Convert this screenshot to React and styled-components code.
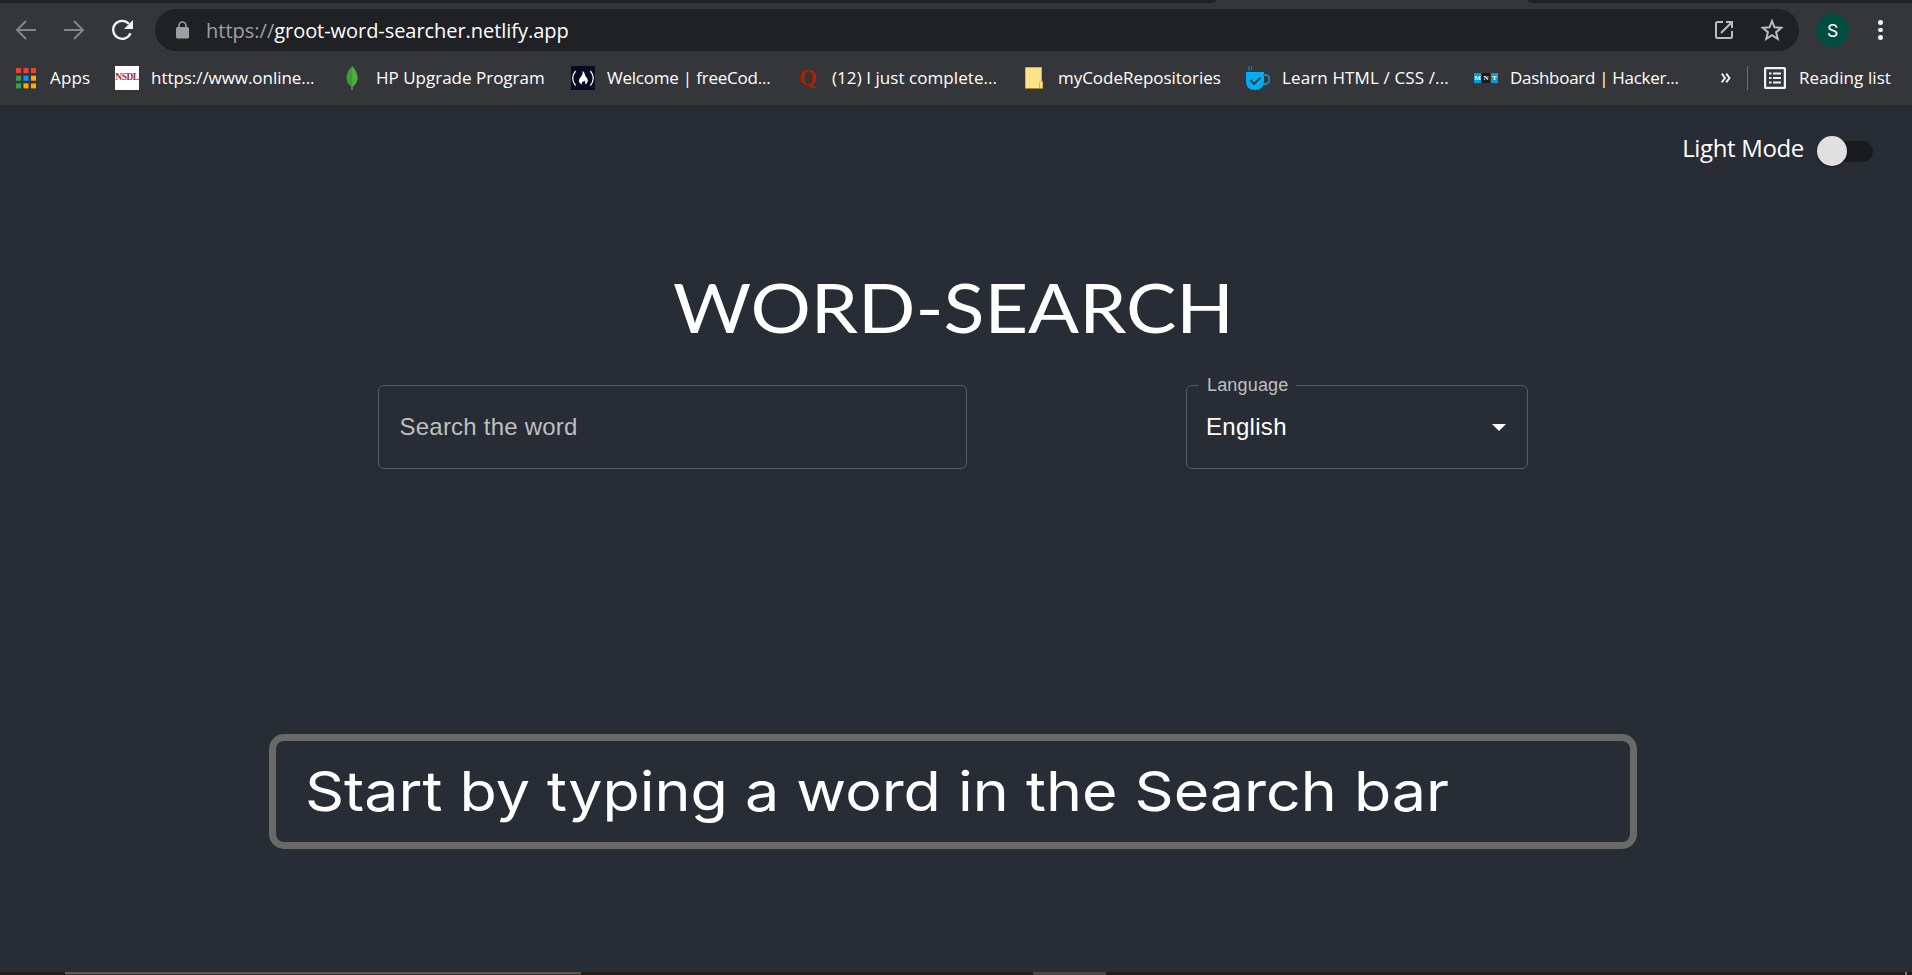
import React from "react";
import styled, { createGlobalStyle } from "styled-components";

const GlobalStyle = createGlobalStyle`
  *, *::before, *::after { box-sizing: border-box; }
  body { margin: 0; background: #282c34; color: #fff; overflow: hidden; }
  svg { display: block; flex: none; }
`;

const uiFont = `"Open Sans", "Noto Sans", sans-serif`;
const formFont = `"Liberation Sans", Arial, sans-serif`;

const Window = styled.div`
  display: flex;
  flex-direction: column;
  width: 1912px;
  height: 975px;
  background: #282c34;
  overflow: hidden;
`;

const TabStrip = styled.div`
  display: flex;
  justify-content: space-between;
  flex: none;
  height: 3px;
  background: #35363a;
`;

const TabStripEdge = styled.div`
  width: ${(p) => p.$width}px;
  background: #202124;
  border-radius: ${(p) => (p.$side === "left" ? "0 0 3px 0" : "0 0 0 3px")};
`;

const Toolbar = styled.header`
  display: flex;
  align-items: center;
  flex: none;
  height: 54px;
  padding-left: 14px;
  background: #35363a;
  font-family: ${uiFont};
`;

const NavButtons = styled.nav`
  display: flex;
  gap: 24px;
  width: 141px;
`;

const AddressBar = styled.div`
  display: flex;
  align-items: center;
  width: 1644px;
  height: 42px;
  padding: 0 15px 0 21px;
  border-radius: 21px;
  background: #202124;
`;

const Url = styled.div`
  flex: 1;
  margin-left: 17px;
  padding-top: 1px;
  color: #fff;
  font-size: 20px;
  line-height: 42px;
  letter-spacing: -0.05px;
`;

const Scheme = styled.span`
  color: #9aa0a6;
  letter-spacing: 0;
`;

const AddressActions = styled.div`
  display: flex;
  gap: 24px;
`;

const Avatar = styled.div`
  width: 33px;
  height: 33px;
  margin-left: 17px;
  border-radius: 50%;
  background: #004d40;
  font: 18px/34px Roboto, sans-serif;
  text-align: center;
`;

const MenuDots = styled.div`
  display: flex;
  flex-direction: column;
  gap: 3px;
  margin-left: 29px;

  i {
    width: 4.6px;
    height: 4.6px;
    border-radius: 50%;
    background: #f1f3f4;
  }
`;

const BookmarkBar = styled.div`
  display: flex;
  align-items: center;
  flex: none;
  height: 50px;
  padding: 0 0 6px 14px;
  background: #35363a;
  border-bottom: 2px solid #292a2c;
  font-family: ${uiFont};
`;

const Bookmark = styled.div`
  display: flex;
  align-items: center;
  flex: none;
  width: ${(p) => p.$width}px;
`;

const IconSlot = styled.div`
  display: flex;
  justify-content: center;
  width: 24px;
`;

const BookmarkLabel = styled.span`
  margin-left: ${(p) => p.$gap || 12}px;
  font-size: 17px;
  line-height: 24px;
  letter-spacing: ${(p) => p.$spacing || 0}px;
  white-space: nowrap;
`;

const NsdlIcon = styled.div`
  width: 24px;
  height: 24px;
  background: #fff;
  color: #a02c34;
  font: bold 9.5px/23px "Liberation Serif", serif;
  letter-spacing: -0.5px;
  text-align: center;
`;

const QuoraIcon = styled.div`
  color: #aa2200;
  font: bold 23px/24px "Liberation Serif", serif;
`;

const MntIcon = styled.div`
  display: flex;
  gap: 1px;
`;

const MntLetter = styled.span`
  width: 7.4px;
  height: 10px;
  background: ${(p) => p.$color};
  font: bold 7px/10px "Liberation Serif", serif;
  text-align: center;
`;

const Divider = styled.div`
  width: 1px;
  height: 24px;
  margin: 0 16px;
  background: #6b6c6f;
`;

const Page = styled.main`
  display: flex;
  flex-direction: column;
  flex: 1;
`;

const ModeRow = styled.div`
  display: flex;
  justify-content: flex-end;
  align-items: center;
  height: 88px;
  padding-right: 39px;
`;

const ModeLabel = styled.span`
  padding-bottom: 6px;
  font: 24px/30px ${uiFont};
  letter-spacing: -0.35px;
`;

const SwitchTrack = styled.div`
  display: flex;
  align-items: center;
  width: 51px;
  height: 21px;
  margin-left: 18px;
  border-radius: 11px;
  background: #1a1b1f;
`;

const SwitchThumb = styled.div`
  flex: none;
  width: 30px;
  height: 30px;
  margin-left: -5px;
  border-radius: 50%;
  background: #e0e0e0;
  box-shadow: 0 2px 2px rgba(0, 0, 0, 0.25);
`;

const Title = styled.h1`
  width: 505px;
  height: 82px;
  margin: 71px 0 0 673px;
  font: 400 68px/82px Lato, sans-serif;
  white-space: nowrap;
  transform: scaleX(1.11);
  transform-origin: left center;
`;

const SearchRow = styled.div`
  display: flex;
  justify-content: space-between;
  width: 1150px;
  margin: 37px 0 0 378px;
  font-family: ${formFont};
`;

const Field = styled.div`
  position: relative;
  display: flex;
  align-items: center;
  width: ${(p) => p.$width}px;
  height: 84px;
  padding: 0 20px;
  border: 1px solid #585b61;
  border-radius: 6px;
`;

const Placeholder = styled.span`
  margin-left: 0.5px;
  color: #bebfc1;
  font-size: 24px;
  letter-spacing: 0.225px;
`;

const SelectValue = styled.span`
  flex: 1;
  margin-left: -1px;
  font-size: 24px;
  letter-spacing: 0.3px;
`;

const FloatingLabel = styled.span`
  position: absolute;
  top: -12px;
  left: 12px;
  width: 97px;
  padding-left: 8px;
  background: #282c34;
  color: #bebfc1;
  font-size: 18px;
  line-height: 22px;
  letter-spacing: 0.17px;
`;

const Caret = styled.i`
  margin: 1px 1px 0 0;
  border: 7.5px solid transparent;
  border-top-color: #fff;
  border-bottom: 0;
`;

const MessageCard = styled.section`
  width: 1368px;
  height: 115px;
  margin: 265px 0 0 269px;
  padding-left: 29px;
  border: 7px solid #696969;
  border-radius: 15px;
`;

const Message = styled.p`
  width: 1032px;
  margin: 0;
  font: 400 55px/101px Inter, sans-serif;
  white-space: nowrap;
  transform: scaleX(1.108);
  transform-origin: left center;
`;

const Taskbar = styled.footer`
  display: flex;
  flex: none;
  height: 3px;
  background: #201c1e;
`;

const TaskButton = styled.div`
  width: ${(p) => p.$width}px;
  margin-left: ${(p) => p.$offset}px;
  border-top: ${(p) => p.$border}px solid #5d5a5e;
  background: ${(p) => p.$color};
`;

const appColors = ["#ea4335", "#ea4335", "#ea4335", "#34a053", "#1a8cff", "#fbab05", "#34a053", "#fbab05", "#fbab05"];

const AppsIcon = () => (
  <svg width="20" height="21" viewBox="0 0 20 21">
    {appColors.map((c, i) => (
      <rect key={i} x={(i % 3) * 7.5} y={Math.floor(i / 3) * 7.7} width="5" height="5" fill={c} />
    ))}
  </svg>
);

const LeafIcon = () => (
  <svg width="12" height="24" viewBox="0 0 12 24">
    <path d="M6 19v5" stroke="#9b9484" strokeWidth="1.2" />
    <path d="M6 0C9 3 11.5 7 11.5 12c0 4-2 7-5.5 9C2.500 19 .5 16 .5 12 .5 7 3.500 3 6 0z" fill="#439934" />
    <path d="M6 0C9 3 11.500 7 11.500 12c0 4-2 7-5.500 9z" fill="#4faa41" />
  </svg>
);

const CampIcon = () => (
  <svg width="24" height="24" viewBox="0 0 24 24">
    <rect width="24" height="24" fill="#0a0a23" />
    <path d="M4.600 5Q-1.200 12 4.600 19.500M19.400 5q5.800 7-0 14.500" fill="none" stroke="#eee" strokeWidth="1.300" />
    <path d="M11.500 5c3 2 2 4.500 4 6.500 2.500 2.800 1 6-1.500 7 .7-2 .3-3.200-1-4-.2 1.200-.8 1.500-1.500 1.200-1 .7-.8 1.900 0 2.800-3.500-1-4.500-4-2.500-6.500 2-2.300 3.200-4 2.500-7z" fill="#fff" />
  </svg>
);

const FolderIcon = () => (
  <svg width="18" height="22" viewBox="0 0 18 22">
    <path d="M.500.500h16v14h1v7H.500z" fill="#ffe28a" stroke="#d9b23c" />
    <path d="M14.500 21v-5.500q0-1 1.500-1" fill="none" stroke="#d9b23c" />
    <path d="M0 21.500h18" stroke="#a48630" />
  </svg>
);

const CupIcon = () => (
  <svg width="24" height="24" viewBox="0 0 24 24">
    <path d="M3 0v5M5.500 0v4" stroke="#267ba5" strokeWidth="1.200" />
    <path d="M0 6h18v9c0 5-2.500 9-9 9s-9-4-9-9z" fill="#02adf3" />
    <path d="M17 9h2.500a3.500 4 0 0 1 0 9H17" fill="none" stroke="#178fc4" strokeWidth="1.800" />
    <path d="M4.500 14l3.500 4 6.500-6.500" fill="none" stroke="#28444f" strokeWidth="2" />
  </svg>
);

const ListIcon = () => (
  <svg width="22" height="22" viewBox="0 0 22 22" fill="none" stroke="#f1f3f4">
    <rect x="1.100" y="1.100" width="19.800" height="19.800" rx=".5" strokeWidth="2.200" />
    <path d="M5 6.500h2.500M5 11h2.500M5 15.500h2.500M9 6.500h8M9 11h8M9 15.500h8" strokeWidth="2" />
  </svg>
);

const ArrowIcon = ({ forward }) => (
  <svg width="24" height="24" viewBox="0 0 24 24" fill="none" stroke="#85868a" strokeWidth="2">
    <path d={forward ? "M2 12h19M12 3l9 9-9 9" : "M22 12H3M12 3l-9 9 9 9"} />
  </svg>
);

const ReloadIcon = () => (
  <svg width="24" height="24" viewBox="0 0 24 24">
    <path d="M20.500 15.200a9 9 0 1 1-1.600-9.400" fill="none" stroke="#f1f3f4" strokeWidth="2.300" />
    <path d="M23 2v9h-9z" fill="#f1f3f4" />
  </svg>
);

const LockIcon = () => (
  <svg width="13" height="18" viewBox="0 0 13 18">
    <path d="M3 8V4.500a3.500 3.500 0 0 1 7 0V8" fill="none" stroke="#9aa0a6" strokeWidth="1.600" />
    <rect y="6" width="13" height="11.500" rx="1.500" fill="#9aa0a6" />
  </svg>
);

const OpenIcon = () => (
  <svg width="24" height="24" viewBox="0 0 24 24" fill="none" stroke="#bdbebf" strokeWidth="2">
    <path d="M11 4H5.500Q4 4 4 5.500v13Q4 20 5.500 20h13q1.500 0 1.500-1.500V13M14 4h6v6M20 4L9 15" />
  </svg>
);

const StarIcon = () => (
  <svg width="24" height="24" viewBox="0 0 24 24">
    <path d="M12 3l2.500 6.300 6.700.5-5.100 4.400 1.600 6.600-5.700-3.600-5.700 3.600 1.600-6.600-5.100-4.400 6.700-.5z" fill="none" stroke="#bdbebf" strokeWidth="2" />
  </svg>
);

const OverflowIcon = () => (
  <svg width="10" height="10" viewBox="0 0 10 10" fill="none" stroke="#f1f3f4" strokeWidth="1.900">
    <path d="M.7.700L4 5 .700 9.300M5.200.700L8.500 5 5.200 9.300" />
  </svg>
);

const Mnt = () => (
  <MntIcon>
    <MntLetter $color="#0a9bd0">M</MntLetter>
    <MntLetter $color="#1d1a1b">N</MntLetter>
    <MntLetter $color="#0a9bd0">T</MntLetter>
  </MntIcon>
);

const bookmarks = [
  { label: "Apps", icon: <AppsIcon />, width: 101, spacing: 0.15 },
  { label: "https://www.online...", icon: <NsdlIcon>NSDL</NsdlIcon>, width: 225, spacing: -0.05 },
  { label: "HP Upgrade Program", icon: <LeafIcon />, width: 231 },
  { label: "Welcome | freeCod...", icon: <CampIcon />, width: 225, spacing: -0.22 },
  { label: "(12) I just complete...", icon: <QuoraIcon>Q</QuoraIcon>, width: 226, spacing: 0.06 },
  { label: "myCodeRepositories", icon: <FolderIcon />, width: 224, spacing: -0.03 },
  { label: "Learn HTML / CSS /...", icon: <CupIcon />, width: 228, spacing: 0.13 },
  { label: "Dashboard | Hacker...", icon: <Mnt />, width: 247, spacing: -0.3 },
];

export default function App() {
  return (
    <Window>
      <GlobalStyle />
      <TabStrip>
        <TabStripEdge $width={1216} $side="left" />
        <TabStripEdge $width={384} $side="right" />
      </TabStrip>
      <Toolbar>
        <NavButtons>
          <ArrowIcon />
          <ArrowIcon forward />
          <ReloadIcon />
        </NavButtons>
        <AddressBar>
          <LockIcon />
          <Url><Scheme>https://</Scheme>groot-word-searcher.netlify.app</Url>
          <AddressActions>
            <OpenIcon />
            <StarIcon />
          </AddressActions>
        </AddressBar>
        <Avatar>S</Avatar>
        <MenuDots><i /><i /><i /></MenuDots>
      </Toolbar>
      <BookmarkBar>
        {bookmarks.map((b) => (
          <Bookmark key={b.label} $width={b.width}>
            <IconSlot>{b.icon}</IconSlot>
            <BookmarkLabel $spacing={b.spacing}>{b.label}</BookmarkLabel>
          </Bookmark>
        ))}
        <OverflowIcon />
        <Divider />
        <ListIcon />
        <BookmarkLabel $gap={13} $spacing={0.08}>Reading list</BookmarkLabel>
      </BookmarkBar>
      <Page>
        <ModeRow>
          <ModeLabel>Light Mode</ModeLabel>
          <SwitchTrack><SwitchThumb /></SwitchTrack>
        </ModeRow>
        <Title>WORD-SEARCH</Title>
        <SearchRow>
          <Field $width={589}>
            <Placeholder>Search the word</Placeholder>
          </Field>
          <Field $width={342}>
            <FloatingLabel>Language</FloatingLabel>
            <SelectValue>English</SelectValue>
            <Caret />
          </Field>
        </SearchRow>
        <MessageCard>
          <Message>Start by typing a word in the Search bar</Message>
        </MessageCard>
      </Page>
      <Taskbar>
        <TaskButton $offset={65} $width={516} $border={2} $color="#3b3433" />
        <TaskButton $offset={452} $width={73} $border={0} $color="#4a474a" />
        <TaskButton $offset={799} $width={2} $border={0} $color="#77757a" />
      </Taskbar>
    </Window>
  );
}
